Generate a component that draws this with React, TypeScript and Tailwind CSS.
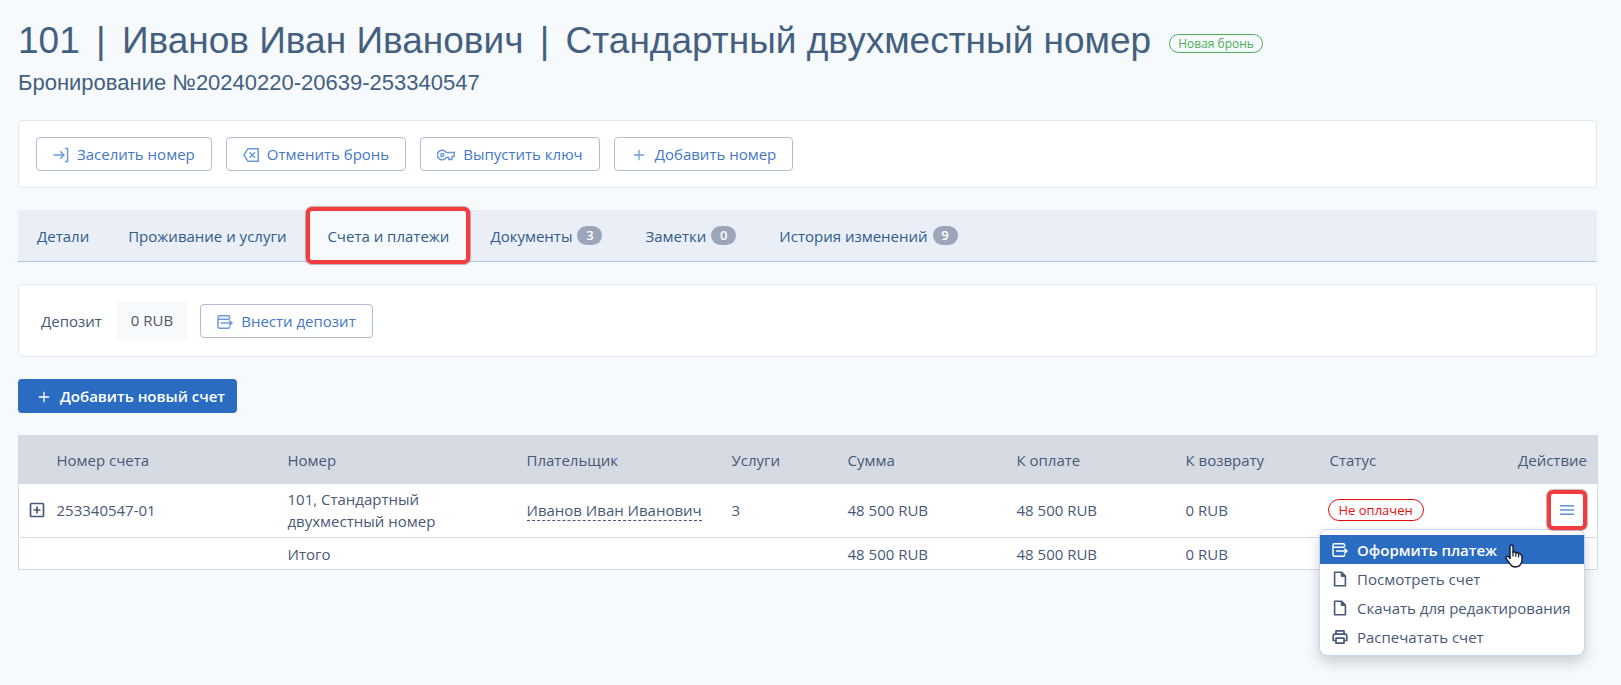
import React from "react";

type IconProps = { className?: string };

const stroke = {
  viewBox: "0 0 16 16",
  fill: "none",
  stroke: "currentColor",
  strokeWidth: 1.5,
  "aria-hidden": true,
} as const;

const EnterIcon = ({ className = "" }: IconProps) => (
  <svg {...stroke} className={`size-4 ${className}`}>
    <path d="M0.5 8H11M7.2 4.2l3.8 3.8-3.8 3.8M12 1.5H14.6V14.5H12" />
  </svg>
);

const CancelIcon = ({ className = "" }: IconProps) => (
  <svg {...stroke} className={`size-4 ${className}`}>
    <path d="M5 1.7H15.2V14.3H5L0.9 8Z" />
    <path d="M6.6 5.2l5.4 5.6M12 5.2l-5.4 5.6" />
  </svg>
);

const KeyIcon = ({ className = "" }: IconProps) => (
  <svg {...stroke} viewBox="0 0 18 16" className={`h-4 w-[18px] ${className}`}>
    <path d="M9.3 5.6A4.8 4.8 0 1 0 9.3 10.4H11.8V12.6H15V9.6H17.2V5.6Z" />
    <circle cx="5.3" cy="8" r="1.5" />
  </svg>
);

const PlusIcon = ({ className = "" }: IconProps) => (
  <svg {...stroke} strokeWidth={1.3} className={`size-4 ${className}`}>
    <path d="M8 2.8v10.4M2.8 8h10.4" />
  </svg>
);

const PaymentIcon = ({ className = "" }: IconProps) => (
  <svg {...stroke} className={`size-4 ${className}`}>
    <path d="M12.6 4.8V3.2Q12.6 1.7 11.1 1.7H2.5Q1 1.7 1 3.2V12.8Q1 14.3 2.5 14.3H11.1Q12.6 14.3 12.6 12.8V12.2" />
    <path d="M1 5.2H12.6M4 9H14.6M12.4 6.6l2.5 2.4-2.5 2.4" />
  </svg>
);

const FileIcon = ({ className = "" }: IconProps) => (
  <svg {...stroke} strokeWidth={1.6} className={`size-4 ${className}`}>
    <path d="M2.6 1.2H9.6L13.4 5V14.8H2.6Z" strokeLinejoin="round" />
    <path d="M9.2 1.2V5.4H13.4Z" fill="currentColor" strokeWidth={1} />
  </svg>
);

const PrinterIcon = ({ className = "" }: IconProps) => (
  <svg {...stroke} strokeWidth={1.7} strokeLinejoin="round" className={`size-4 ${className}`}>
    <path d="M4 5V1.8H12V5M4 11.5H1.2V7Q1.2 5.2 3 5.2H13Q14.8 5.2 14.8 7V11.5H12" />
    <path d="M4 9.2H12V14.2H4Z" />
  </svg>
);

const MenuIcon = () => (
  <svg {...stroke} className="size-4">
    <path d="M1 3.7H15M1 8H15M1 12.3H15" />
  </svg>
);

const ExpandIcon = () => (
  <svg {...stroke} strokeWidth={1.7} className="size-4">
    <rect x="1.5" y="1.5" width="13" height="13" rx="1" />
    <path d="M8 4.5v7M4.5 8h7" />
  </svg>
);

const HandCursor = ({ className }: IconProps) => (
  <svg viewBox="0 0 18 24" aria-hidden className={className}>
    <path
      d="M5 14.5V2.6Q5 1 6.5 1T8 2.6V8.2Q9.6 7.2 10.8 8.8Q12.4 8 13.4 9.6Q15 9 16 10.6Q17 11.4 17 13V16Q17 18 16 19.6Q14.6 23 10.4 23Q7 23 5.4 20.4L1.4 15Q0.6 13.4 1.6 12.6Q2.8 12 4 13.2Z"
      fill="#fff"
      stroke="#16182b"
      strokeWidth="1.4"
      strokeLinejoin="round"
    />
    <path d="M8 8v4.5M10.8 8.8v4M13.6 9.8v3.4" stroke="#16182b" strokeWidth="1.2" />
  </svg>
);

const titleParts = ["101", "Иванов Иван Иванович", "Стандартный двухместный номер"];

const actions = [
  { label: "Заселить номер", Icon: EnterIcon },
  { label: "Отменить бронь", Icon: CancelIcon },
  { label: "Выпустить ключ", Icon: KeyIcon },
  { label: "Добавить номер", Icon: PlusIcon },
];

const tabs = [
  { label: "Детали" },
  { label: "Проживание и услуги" },
  { label: "Счета и платежи", active: true },
  { label: "Документы", count: 3 },
  { label: "Заметки", count: 0 },
  { label: "История изменений", count: 9 },
];

const menuItems = [
  { label: "Оформить платеж", Icon: PaymentIcon, active: true },
  { label: "Посмотреть счет", Icon: FileIcon },
  { label: "Скачать для редактирования", Icon: FileIcon },
  { label: "Распечатать счет", Icon: PrinterIcon },
];

const OutlineButton = ({ label, Icon }: { label: string; Icon: React.FC<IconProps> }) => (
  <button
    type="button"
    className="flex h-[34px] items-center gap-2 rounded border border-[#b0bdd3] bg-white px-4 text-[#4377c4]"
  >
    <Icon className="mt-0.5 text-[#6c9ad6]" />
    {label}
  </button>
);

export default function App() {
  return (
    <main className="min-h-screen bg-[#f6fafd] px-[18px] pt-4 pr-6 font-['Open_Sans',sans-serif] text-[15px] leading-[22px] text-[#475977]">
      <header className="font-['Liberation_Sans',sans-serif] text-[#44607f]">
        <div className="flex items-center gap-[18px]">
          <h1 className="text-[37px] leading-[50px]">
            {titleParts.map((part, i) => (
              <React.Fragment key={part}>
                {i > 0 && <span className="mx-1.5"> | </span>}
                {part}
              </React.Fragment>
            ))}
          </h1>
          <span className="mt-1 rounded-full border border-[#4ead58] px-2 font-['Open_Sans',sans-serif] text-[12px] leading-[17px] text-[#4ead58]">
            Новая бронь
          </span>
        </div>
        <p className="text-[22px] leading-[34px]">Бронирование №20240220-20639-253340547</p>
      </header>

      <section className="mt-5 flex gap-3.5 rounded border border-[#dfe7f2] bg-white px-[17px] py-4">
        {actions.map(({ label, Icon }) => (
          <OutlineButton key={label} label={label} Icon={Icon} />
        ))}
      </section>

      <nav className="mt-[22px] flex h-[52px] gap-px border-b border-[#b0cbe0] bg-[#eaeef6]">
        {tabs.map(({ label, count, active }) => (
          <a
            key={label}
            href="#"
            className={
              active
                ? "-my-[3px] flex items-center rounded-md border-4 border-[#f03c3e] bg-[#f6fafd] px-[17px] text-[#2f5c8a] shadow-[0_0_1px_1px_rgba(110,60,70,0.4)]"
                : "flex items-center px-[19px] text-[#2f5c8a]"
            }
          >
            {label}
            {count !== undefined && (
              <span className="mr-1 ml-[5px] min-w-[25px] rounded-full bg-[#9ba6ba] text-center text-[13px] leading-[19px] font-semibold text-white">
                {count}
              </span>
            )}
          </a>
        ))}
      </nav>

      <section className="mt-[22px] flex items-center rounded border border-[#dfe7f2] bg-white py-[17px] pl-[22px]">
        <span>Депозит</span>
        <span className="mr-[13px] ml-[15px] bg-[#f6fafd] px-3.5 pt-[7px] pb-2 text-[#555]">0 RUB</span>
        <OutlineButton label="Внести депозит" Icon={PaymentIcon} />
      </section>

      <button type="button" className="mt-[22px] flex h-[34px] items-center gap-2 rounded bg-[#296cc2] pr-3 pl-[18px] font-semibold text-white">
        <PlusIcon className="mt-0.5" />
        Добавить новый счет
      </button>

      <div className="relative mt-[22px]">
        <table className="w-full table-fixed border border-[#d6dbe3] bg-white text-left">
          <colgroup>
            <col className="w-[28px]" />
            <col className="w-[231px]" />
            <col className="w-[239px]" />
            <col className="w-[205px]" />
            <col className="w-[116px]" />
            <col className="w-[169px]" />
            <col className="w-[169px]" />
            <col className="w-[144px]" />
            <col className="w-[278px]" />
          </colgroup>
          <thead className="bg-[#d6dbe3]">
            <tr className="h-12">
              <th aria-label="Развернуть" />
              {["Номер счета", "Номер", "Плательщик", "Услуги", "Сумма", "К оплате", "К возврату"].map((h) => (
                <th key={h} className="px-2.5 font-normal">{h}</th>
              ))}
              <th className="px-2.5 font-normal">
                <div className="flex justify-between">
                  <span>Статус</span>
                  <span>Действие</span>
                </div>
              </th>
            </tr>
          </thead>
          <tbody>
            <tr className="h-[54px] border-b border-[#d6dbe3]">
              <td className="pl-2.5">
                <button type="button" aria-label="Развернуть счет" className="block">
                  <ExpandIcon />
                </button>
              </td>
              <td className="px-2.5">253340547-01</td>
              <td className="px-2.5 pr-16">101, Стандартный двухместный номер</td>
              <td className="px-2.5 whitespace-nowrap">
                <a href="#" className="inline-block border-b border-dashed border-[#475977] leading-5">Иванов Иван Иванович</a>
              </td>
              <td className="px-2.5">3</td>
              <td className="px-2.5">48 500 RUB</td>
              <td className="px-2.5">48 500 RUB</td>
              <td className="px-2.5">0 RUB</td>
              <td className="pr-2.5 pl-2">
                <div className="flex items-center justify-between">
                  <span className="rounded-full border border-[#e60f0f] px-2.5 text-[13px] leading-5 text-[#e60f0f]">Не оплачен</span>
                  <button
                    type="button"
                    aria-label="Действия"
                    className="relative z-10 flex size-10 items-center justify-center rounded-md border-4 border-[#f03c3e] bg-white text-[#5f92d6] shadow-[0_0_1px_1px_rgba(110,60,70,0.4)]"
                  >
                    <MenuIcon />
                  </button>
                </div>
              </td>
            </tr>
            <tr className="h-8">
              <td />
              <td />
              <td className="px-2.5">Итого</td>
              <td />
              <td />
              <td className="px-2.5">48 500 RUB</td>
              <td className="px-2.5">48 500 RUB</td>
              <td className="px-2.5">0 RUB</td>
              <td />
            </tr>
          </tbody>
        </table>

        <div className="absolute top-[94px] right-3 w-[266px] rounded-lg border border-[#c2d5ec] bg-white pt-[5px] pb-1 shadow-[0_6px_14px_rgba(0,0,0,0.18)]">
          {menuItems.map(({ label, Icon, active }) => (
            <button
              key={label}
              type="button"
              className={
                active
                  ? "flex h-[29px] w-full items-center gap-[9px] bg-[#296cc2] pl-3 font-semibold text-white"
                  : "flex h-[29px] w-full items-center gap-[9px] pl-3"
              }
            >
              <Icon />
              {label}
            </button>
          ))}
          <HandCursor className="pointer-events-none absolute top-[14px] left-[185px] h-6 w-[18px]" />
        </div>
      </div>
    </main>
  );
}
